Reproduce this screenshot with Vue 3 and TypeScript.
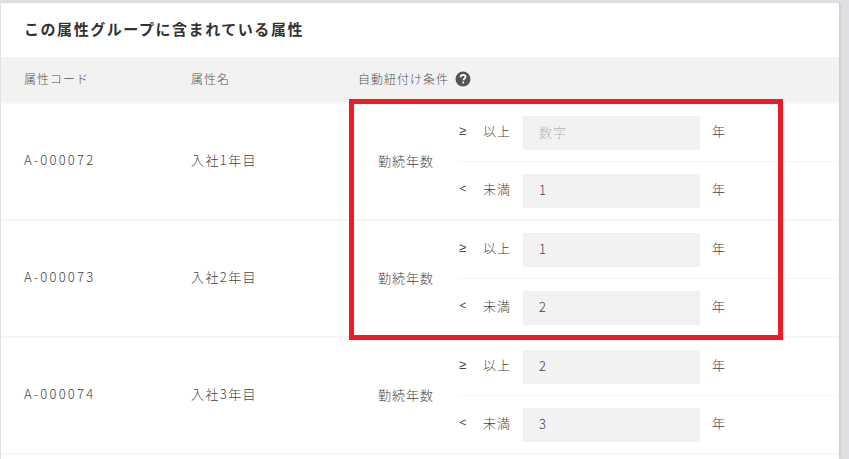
<template>
  <div class="page">
    <section class="card">
      <h2 class="card-title">この属性グループに含まれている属性</h2>

      <div class="table-head">
        <div class="col-code">属性コード</div>
        <div class="col-name">属性名</div>
        <div class="col-cond">
          自動紐付け条件
          <svg class="help" width="16" height="16" viewBox="0 0 16 16" aria-hidden="true">
            <circle cx="8" cy="8" r="7.5" fill="#555" />
            <path d="M5.6 6.3c0-1.5 1.1-2.4 2.5-2.4s2.4.8 2.4 2c0 1-.6 1.5-1.2 1.9-.6.4-.8.7-.8 1.4" fill="none" stroke="#fff" stroke-width="1.7" />
            <rect x="7.3" y="10.6" width="1.8" height="1.8" fill="#fff" />
          </svg>
        </div>
      </div>

      <div v-for="row in rows" :key="row.code" class="table-row">
        <div class="col-code code-value">{{ row.code }}</div>
        <div class="col-name name-value">{{ row.name }}</div>
        <div class="condition-label">勤続年数</div>
        <div class="condition-lines">
          <div class="line">
            <span class="op">≥</span>
            <span class="op-label">以上</span>
            <input class="num" type="text" :value="row.min" placeholder="数字" />
            <span class="unit">年</span>
          </div>
          <div class="line">
            <span class="op">&lt;</span>
            <span class="op-label">未満</span>
            <input class="num" type="text" :value="row.max" placeholder="数字" />
            <span class="unit">年</span>
          </div>
        </div>
      </div>
    </section>

    <div class="highlight"></div>
  </div>
</template>

<script setup lang="ts">
interface AttributeRow {
  code: string
  name: string
  min: string
  max: string
}

const rows: AttributeRow[] = [
  { code: 'A-000072', name: '入社1年目', min: '', max: '1' },
  { code: 'A-000073', name: '入社2年目', min: '1', max: '2' },
  { code: 'A-000074', name: '入社3年目', min: '2', max: '3' },
]
</script>

<style>
html,
body {
  margin: 0;
  overflow: hidden;
}
</style>

<style scoped>
.page {
  position: relative;
  box-sizing: border-box;
  width: 849px;
  height: 459px;
  padding: 3px 10px 0 1px;
  overflow: hidden;
  background: #dfe0e4;
  font-family: "Noto Sans CJK JP", "Noto Sans", sans-serif;
  font-size: 13px;
  font-weight: 300;
  letter-spacing: 1px;
  color: #444;
}

.card {
  min-height: 456px;
  background: #fff;
  box-shadow: 2px 0 2px rgba(0, 0, 0, 0.08);
}

.card-title {
  height: 54px;
  margin: 0;
  padding-left: 23px;
  font-size: 15px;
  font-weight: 700;
  letter-spacing: 1.55px;
  line-height: 51px;
  color: #333;
}

.table-head {
  display: flex;
  align-items: center;
  box-sizing: border-box;
  height: 47px;
  padding-bottom: 3px;
  border-bottom: 2px solid #f8f8f8;
  background: #f2f2f2;
  font-size: 12px;
  letter-spacing: 1px;
  color: #555;
}

.col-code {
  width: 167px;
  margin-left: 23px;
}

.code-value {
  padding-bottom: 5px;
  letter-spacing: 2.2px;
}

.col-name {
  width: 167px;
}

.name-value {
  padding-bottom: 5px;
  letter-spacing: 1.4px;
}

.col-cond {
  display: flex;
  align-items: center;
  gap: 6px;
}

.help {
  margin-top: 2px;
}

.table-row {
  display: flex;
  align-items: center;
  box-sizing: border-box;
  height: 117px;
  border-bottom: 2px solid #f6f6f6;
}

.condition-label {
  box-sizing: border-box;
  width: 99px;
  padding-bottom: 3px;
  padding-left: 20px;
  white-space: nowrap;
}

.condition-lines {
  flex: 1;
  align-self: stretch;
  display: flex;
  flex-direction: column;
}

.line {
  flex: 1;
  display: flex;
  align-items: center;
  padding-left: 2px;
}

.line:first-child {
  border-bottom: 1px solid #f6f6f6;
}

.op {
  width: 24px;
  padding-bottom: 5px;
  font-family: "Noto Sans", sans-serif;
  font-weight: 400;
}

.op-label {
  width: 40px;
  padding-bottom: 5px;
}

.num {
  box-sizing: border-box;
  width: 177px;
  height: 34px;
  padding: 0 15px 2px;
  border: 1px solid #f0f0f0;
  border-radius: 2px;
  outline: none;
  background: #f2f2f2;
  font: inherit;
  letter-spacing: inherit;
  color: #444;
}

.num::placeholder {
  color: #b5b5b5;
}

.unit {
  margin-left: 12px;
  padding-bottom: 5px;
}

.highlight {
  position: absolute;
  top: 99px;
  left: 349px;
  box-sizing: border-box;
  width: 434px;
  height: 241px;
  border: 5px solid #ed1c24;
}
</style>
